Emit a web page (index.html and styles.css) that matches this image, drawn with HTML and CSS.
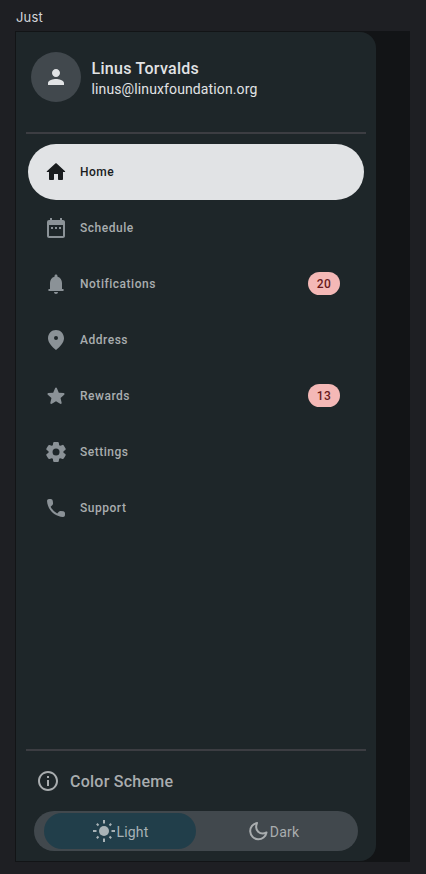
FILE: index.html
```html
<!DOCTYPE html>
<html lang="en">
<head>
<meta charset="utf-8">
<title>Just</title>
<link rel="stylesheet" href="styles.css">
</head>
<body>
<div class="label">Just</div>
<div class="frame">
  <aside class="drawer">
    <header class="profile">
      <div class="avatar"><svg class="icon" viewBox="0 0 24 24"><path d="M12 12c2.21 0 4-1.79 4-4s-1.79-4-4-4-4 1.79-4 4 1.79 4 4 4zm0 2c-2.67 0-8 1.34-8 4v2h16v-2c0-2.66-5.33-4-8-4z"/></svg></div>
      <div class="who">
        <div class="name">Linus Torvalds</div>
        <div class="email">linus@linuxfoundation.org</div>
      </div>
    </header>
    <hr class="divider">
    <nav class="menu">
      <a class="item active"><svg class="icon" viewBox="0 0 24 24"><path d="M11.330 3.600L2.870 11.130c-.33.300-.12.870.34.870H5v7c0 .55.45 1 1 1h3c.55 0 1-.45 1-1v-5h4v5c0 .55.45 1 1 1h3c.55 0 1-.45 1-1v-7h1.700c.46 0 .68-.57.33-.87l-8.360-7.530c-.38-.34-.96-.34-1.340 0z"/></svg><span class="text">Home</span></a>
      <a class="item"><svg class="icon" viewBox="0 0 24 24"><path d="M9 11H7v2h2zm4 0h-2v2h2zm4 0h-2v2h2zM19 4h-1V2h-2v2H8V2H6v2H5a2 2 0 0 0-2 2v14c0 1.100.9 2 2 2h14c1.100 0 2-.9 2-2V6c0-1.100-.9-2-2-2zm0 16H5V9h14z"/></svg><span class="text">Schedule</span></a>
      <a class="item"><svg class="icon" viewBox="0 0 24 24"><path d="M12 22c1.100 0 2-.9 2-2h-4c0 1.100.9 2 2 2zm6.800-5H18v-6c0-3.070-1.640-5.640-4.500-6.320V4c0-.83-.67-1.500-1.500-1.500s-1.500.67-1.500 1.500v.68C7.630 5.360 6 7.920 6 11v6h-.8a1 1 0 0 0 0 2h13.600a1 1 0 0 0 0-2z"/></svg><span class="text">Notifications</span><span class="badge">20</span></a>
      <a class="item"><svg class="icon" viewBox="0 0 24 24"><path fill-rule="evenodd" d="M12 2c-4.400 0-8 3.400-8 8.200 0 4.200 4 8.700 8 11.800 4-3.100 8-7.600 8-11.800C20 5.400 16.400 2 12 2zm0 10a2 2 0 1 1 0-4 2 2 0 0 1 0 4z"/></svg><span class="text">Address</span></a>
      <a class="item"><svg class="icon star" viewBox="0 0 24 24"><path d="M12 17.270l4.150 2.510c.76.460 1.690-.22 1.490-1.080l-1.100-4.720 3.670-3.180c.67-.58.310-1.680-.57-1.750l-4.830-.41-1.890-4.460c-.34-.81-1.490-.81-1.830 0L9.190 8.630l-4.830.41c-.88.070-1.240 1.170-.57 1.750l3.670 3.180-1.100 4.720c-.2.860.73 1.540 1.490 1.080z"/></svg><span class="text">Rewards</span><span class="badge">13</span></a>
      <a class="item"><svg class="icon" viewBox="0 0 24 24"><path d="M19.500 12c0-.23-.01-.45-.03-.68l1.860-1.410c.4-.3.510-.86.260-1.300l-1.870-3.230a.99.99 0 0 0-1.250-.42l-2.150.91c-.37-.26-.76-.49-1.170-.68l-.29-2.310c-.06-.5-.49-.88-.99-.88h-3.730c-.51 0-.94.38-1 .88l-.29 2.310c-.41.190-.8.420-1.170.68l-2.150-.91c-.46-.2-1-.02-1.250.42L2.410 8.620c-.25.440-.14.990.26 1.300l1.860 1.410a7.340 7.340 0 0 0 0 1.350l-1.860 1.410c-.4.300-.51.860-.26 1.300l1.870 3.230c.25.440.79.620 1.250.42l2.150-.91c.37.260.76.490 1.170.68l.29 2.310c.06.500.49.880.99.880h3.730c.5 0 .93-.38.990-.88l.29-2.310c.41-.19.8-.42 1.170-.68l2.150.91c.46.200 1 .02 1.250-.42l1.870-3.230c.25-.44.140-.99-.26-1.300l-1.860-1.410c.03-.23.040-.45.040-.68zm-7.460 3.500a3.500 3.500 0 1 1 0-7 3.500 3.500 0 0 1 0 7z"/></svg><span class="text">Settings</span></a>
      <a class="item"><svg class="icon" viewBox="0 0 24 24"><path d="M19.230 15.260l-2.540-.29a2 2 0 0 0-1.640.57l-1.840 1.840a15.050 15.050 0 0 1-6.590-6.590l1.850-1.850c.43-.43.640-1.030.57-1.640l-.29-2.520a2 2 0 0 0-1.990-1.770H5.030c-1.130 0-2.070.94-2 2.070.53 8.540 7.360 15.360 15.890 15.890 1.130.07 2.070-.87 2.070-2v-1.730c.01-1.010-.75-1.860-1.760-1.980z"/></svg><span class="text">Support</span></a>
    </nav>
    <hr class="divider">
    <footer class="scheme">
      <div class="heading"><svg class="icon" viewBox="0 0 24 24"><path d="M11 7h2v2h-2zm0 4h2v6h-2zm1-9C6.480 2 2 6.480 2 12s4.480 10 10 10 10-4.480 10-10S17.520 2 12 2zm0 18c-4.410 0-8-3.590-8-8s3.590-8 8-8 8 3.590 8 8-3.590 8-8 8z"/></svg><span>Color Scheme</span></div>
      <div class="switch">
        <div class="option selected"><svg class="icon" viewBox="0 0 24 24"><circle cx="12" cy="12" r="5"/><path class="line" d="M12 1v3.500M12 19.500V23M1 12h3.500M19.500 12H23M4.800 4.800l1.700 1.700M17.500 17.500l1.700 1.700M4.800 19.200l1.700-1.700M17.500 6.500l1.700-1.700"/></svg><span>Light</span></div>
        <div class="option dark"><svg class="icon" viewBox="0 0 24 24"><path class="line" d="M11 4A8.200 8.200 0 1 0 20.500 13.500C14 16.500 8 11.500 11 4z"/></svg><span>Dark</span></div>
      </div>
    </footer>
  </aside>
</div>
</body>
</html>
```
FILE: styles.css
```css
* { box-sizing: border-box; }
body {
  margin: 0;
  height: 874px;
  padding: 0 16px 0 15px;
  overflow: hidden;
  background: #1e1f23;
  font-family: Roboto, "Liberation Sans", sans-serif;
}
.label {
  height: 31px;
  padding: 9px 0 0 1px;
  font: 13px/17px Inter, sans-serif;
  letter-spacing: .2px;
  color: #d3d5da;
}
.frame {
  height: 831px;
  padding: 1px;
  background: #121416;
}
.drawer {
  display: flex;
  flex-direction: column;
  width: 360px;
  height: 829px;
  background: #1e2629;
  border-radius: 0 16px 16px 0;
}
.icon {
  display: block;
  flex: none;
  width: 24px;
  height: 24px;
  fill: currentColor;
}
.line {
  fill: none;
  stroke: currentColor;
  stroke-width: 2;
  stroke-linejoin: round;
}
.profile {
  display: flex;
  height: 100px;
  padding: 20px 15px 0;
  gap: 10.5px;
  color: #e1e3e5;
}
.avatar {
  display: grid;
  place-items: center;
  width: 50px;
  height: 50px;
  border-radius: 50%;
  background: #41484d;
}
.who { padding-top: 5px; white-space: nowrap; }
.name {
  font-size: 16px;
  font-weight: 500;
  line-height: 24px;
  letter-spacing: .28px;
}
.email {
  font-size: 14px;
  line-height: 16px;
  letter-spacing: .12px;
}
.divider {
  flex: none;
  width: 340px;
  height: 2px;
  margin: 0 10px;
  border: 0;
  background: #3c3d42;
}
.menu {
  flex: 1;
  padding: 9.500px 12px 0;
}
.item {
  display: flex;
  align-items: center;
  height: 56px;
  padding: 0 24px 0 16px;
  border-radius: 28px;
  color: #8b9297;
}
.item .text {
  margin-left: 12px;
  padding-top: 1px;
  font-size: 12px;
  font-weight: 500;
  letter-spacing: .52px;
  color: #a9adaf;
}
.item.active { background: #e1e3e5; color: #191c1e; }
.item.active .text { color: #191c1e; }
.badge {
  width: 32px;
  height: 23px;
  margin-left: auto;
  border-radius: 12px;
  background: #f4b8b6;
  color: #68191b;
  font-size: 12px;
  font-weight: 500;
  line-height: 24px;
  letter-spacing: .5px;
  text-align: center;
}
.scheme {
  height: 110px;
  padding: 18px 18px 0;
  color: #a9adaf;
}
.heading {
  display: flex;
  align-items: center;
  height: 24px;
  margin-left: 2px;
  gap: 10px;
  font-size: 16px;
  font-weight: 500;
  letter-spacing: .25px;
}
.switch {
  display: flex;
  align-items: center;
  height: 40px;
  margin-top: 18px;
  padding: 0 10px;
  border-radius: 20px;
  background: #41484d;
  font-size: 14px;
  letter-spacing: .22px;
}
.option {
  display: flex;
  align-items: center;
  justify-content: center;
  width: 152px;
  height: 36px;
  padding-left: 1px;
  border-radius: 18px;
}
.option span { padding-top: 1px; }
.selected { background: #213e4a; color: #a8b2b6; }
```
